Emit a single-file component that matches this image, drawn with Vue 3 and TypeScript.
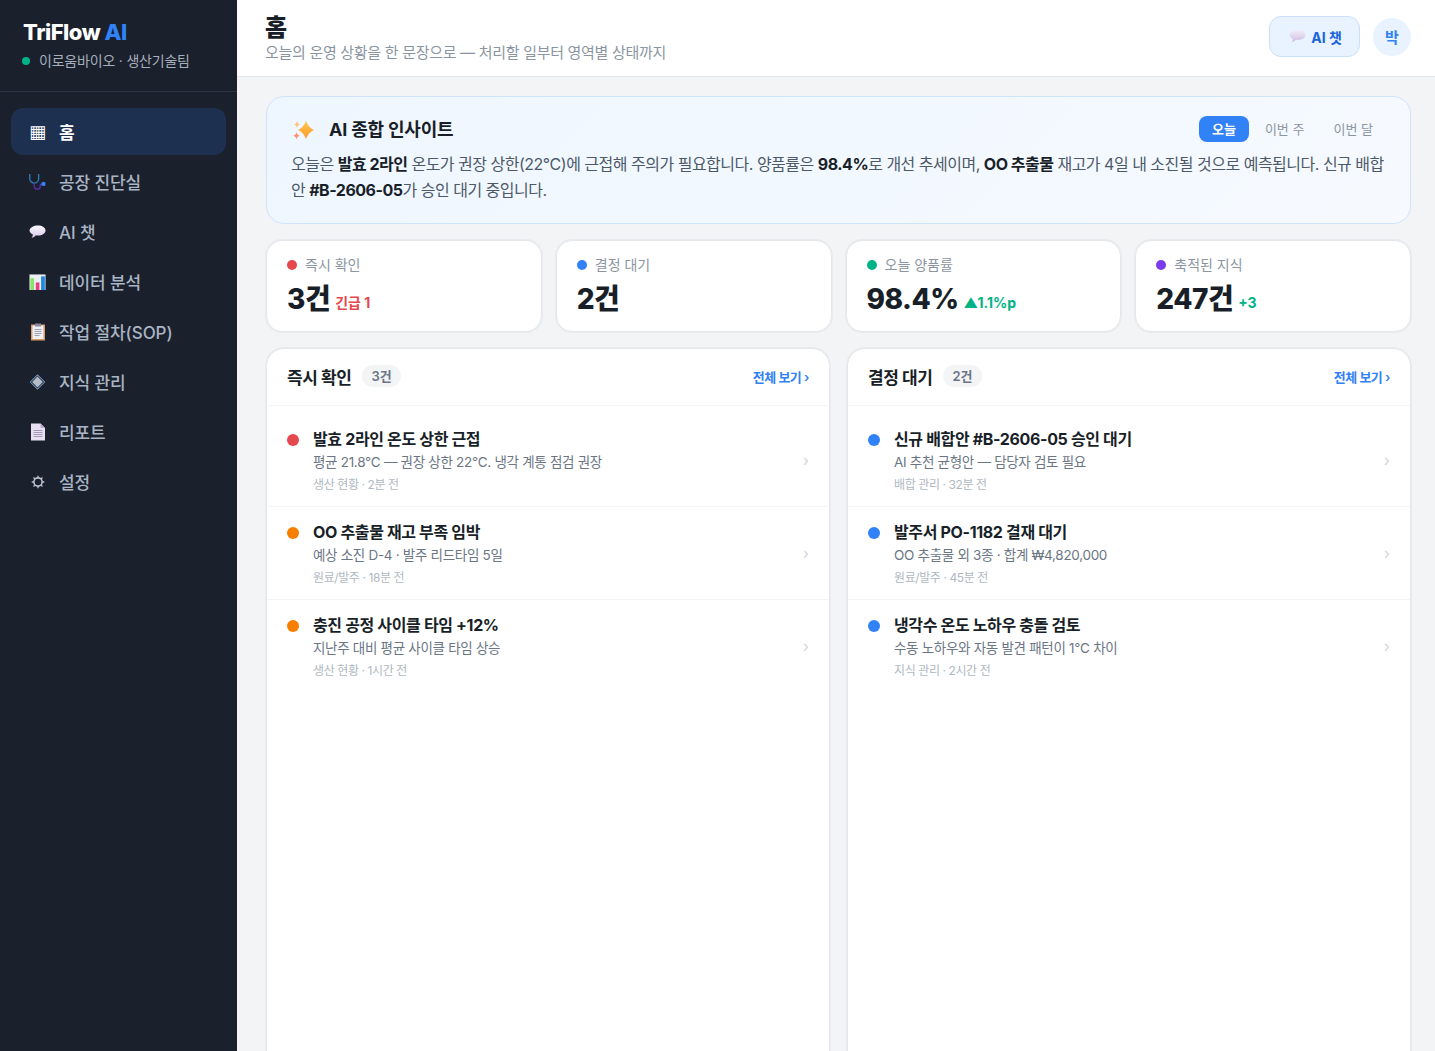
<script setup lang="ts">
const navItems = [
  { label: '홈', icon: 'home', active: true },
  { label: '공장 진단실', icon: 'steth' },
  { label: 'AI 챗', icon: 'chat' },
  { label: '데이터 분석', icon: 'chart' },
  { label: '작업 절차(SOP)', icon: 'clip' },
  { label: '지식 관리', icon: 'diamond' },
  { label: '리포트', icon: 'doc' },
  { label: '설정', icon: 'gear' },
];

const kpis = [
  { label: '즉시 확인', value: '3건', note: '긴급 1', dot: '#e5484d', noteColor: '#e5484d' },
  { label: '결정 대기', value: '2건', note: '', dot: '#3182f6', noteColor: '' },
  { label: '오늘 양품률', value: '98.4%', note: '▲1.1%p', dot: '#00b386', noteColor: '#00b386' },
  { label: '축적된 지식', value: '247건', note: '+3', dot: '#7c3aed', noteColor: '#00b386' },
];

const panels = [
  {
    title: '즉시 확인',
    count: '3건',
    items: [
      { title: '발효 2라인 온도 상한 근접', desc: '평균 21.8°C — 권장 상한 22°C. 냉각 계통 점검 권장', meta: '생산 현황 · 2분 전', dot: '#e5484d' },
      { title: 'OO 추출물 재고 부족 임박', desc: '예상 소진 D-4 · 발주 리드타임 5일', meta: '원료/발주 · 18분 전', dot: '#f77f00' },
      { title: '충진 공정 사이클 타임 +12%', desc: '지난주 대비 평균 사이클 타임 상승', meta: '생산 현황 · 1시간 전', dot: '#f77f00' },
    ],
  },
  {
    title: '결정 대기',
    count: '2건',
    items: [
      { title: '신규 배합안 #B-2606-05 승인 대기', desc: 'AI 추천 균형안 — 담당자 검토 필요', meta: '배합 관리 · 32분 전', dot: '#3182f6' },
      { title: '발주서 PO-1182 결재 대기', desc: 'OO 추출물 외 3종 · 합계 ₩4,820,000', meta: '원료/발주 · 45분 전', dot: '#3182f6' },
      { title: '냉각수 온도 노하우 충돌 검토', desc: '수동 노하우와 자동 발견 패턴이 1°C 차이', meta: '지식 관리 · 2시간 전', dot: '#3182f6' },
    ],
  },
];
</script>

<template>
  <div class="app">
    <aside class="sidebar">
      <div class="brand">
        <div class="logo">TriFlow <span>AI</span></div>
        <div class="org"><i class="org-dot"></i>이로움바이오 · 생산기술팀</div>
      </div>
      <nav class="nav">
        <a v-for="item in navItems" :key="item.label" class="nav-item" :class="{ active: item.active }">
          <span class="nav-icon">
            <template v-if="item.icon === 'home'">▦</template>
            <svg v-else-if="item.icon === 'steth'" width="18" height="18" viewBox="0 0 18 18" fill="none">
              <path d="M.8 .5v5a4.700 4.700 0 0 0 9.400 0v-5" stroke="#2f78b0" stroke-width="1.500" />
              <path d="M5.500 10.500v2c0 2.500 1.500 4.200 3.400 4.200s3-1.400 3-3.400c0-1.400.8-2.100 2.200-2.100" stroke="#5a2ea5" stroke-width="1.500" />
              <circle cx="15.300" cy="11" r="2.300" fill="#3182f6" />
            </svg>
            <svg v-else-if="item.icon === 'chat'" width="18" height="16" viewBox="0 0 18 16">
              <defs>
                <linearGradient id="bubbleNav" x1="0" y1="0" x2="0" y2="1">
                  <stop offset="0" stop-color="#fbf9fe" />
                  <stop offset="1" stop-color="#d9c9ec" />
                </linearGradient>
              </defs>
              <path d="M9.500 1c4.500 0 8 2.200 8 5.300s-3.500 5.300-8 5.300c-.8 0-1.500-.1-2.200-.2-1.100 1.400-2.700 2.300-4.700 2.700 1-1 1.500-2.100 1.500-3.500C2 9.500.6 8 .6 6.300.6 3.200 5 1 9.500 1z" fill="url(#bubbleNav)" />
            </svg>
            <svg v-else-if="item.icon === 'chart'" width="18" height="18" viewBox="0 0 18 18">
              <path d="M0.500 1h17v16.500H.5z" fill="#eceff1" />
              <path d="M1.500 5h3.800v12.500H1.500z" fill="#86e36a" />
              <path d="M7.200 9.500h3.800v8H7.200z" fill="#ec407a" />
              <path d="M12.800 3h4v14.500h-4z" fill="#1e88e5" />
            </svg>
            <svg v-else-if="item.icon === 'clip'" width="16" height="18" viewBox="0 0 16 18">
              <path d="M1 1.500h14V17.500H1z" fill="#d99a66" />
              <path d="M2.500 2.500h11v13.500h-11z" fill="#eef0f5" />
              <path d="M5 .5h6v3H5z" fill="#8d8aa0" />
              <path d="M4.500 6.500h7M4.500 8.500h7M4.500 10.500h7M4.500 12.500h5" stroke="#9e9eb0" stroke-width="1" />
            </svg>
            <svg v-else-if="item.icon === 'diamond'" width="18" height="18" viewBox="0 0 18 18">
              <path d="M9 .8 17.200 9 9 17.200.8 9z" fill="#7fa6d4" />
              <path d="M9 2 16 9 9 16 2 9z" fill="#1a202c" />
              <path d="M9 3.300 14.700 9 9 14.700 3.300 9z" fill="#b4bcc8" />
            </svg>
            <svg v-else-if="item.icon === 'doc'" width="16" height="18" viewBox="0 0 16 18">
              <path d="M1 .5h9.500L15 5v12.500H1z" fill="#e8dff2" />
              <path d="M10.500.5 15 5h-4.500z" fill="#b9a9cc" />
              <path d="M3.500 7.500h9M3.500 9.500h9M3.500 11.500h9M3.500 13.500h9" stroke="#a39ab5" stroke-width="1" />
            </svg>
            <svg v-else width="14" height="14" viewBox="0 0 16 16" fill="none">
              <circle cx="8" cy="8" r="4.700" stroke="#b7c0cc" stroke-width="1.800" />
              <path d="M8 .8v2.500M8 12.700v2.500M.8 8h2.500M12.700 8h2.500M2.900 2.900l1.700 1.700M11.400 11.400l1.700 1.700M13.100 2.900l-1.700 1.700M4.600 11.400l-1.700 1.700" stroke="#b7c0cc" stroke-width="1.500" />
            </svg>
          </span>
          <span>{{ item.label }}</span>
        </a>
      </nav>
    </aside>

    <div class="main">
      <header class="topbar">
        <div>
          <h1>홈</h1>
          <p>오늘의 운영 상황을 한 문장으로 — 처리할 일부터 영역별 상태까지</p>
        </div>
        <div class="top-actions">
          <button class="chat-btn">
            <svg width="17" height="15" viewBox="0 0 18 16">
              <defs>
                <linearGradient id="bubbleTop" x1="0" y1="0" x2="0" y2="1">
                  <stop offset="0" stop-color="#f3eef9" />
                  <stop offset="1" stop-color="#cdbce2" />
                </linearGradient>
              </defs>
              <path d="M9.500 1c4.500 0 8 2.200 8 5.300s-3.500 5.300-8 5.300c-.8 0-1.500-.1-2.200-.2-1.100 1.400-2.700 2.300-4.700 2.700 1-1 1.500-2.100 1.500-3.500C2 9.500.6 8 .6 6.300.6 3.200 5 1 9.500 1z" fill="url(#bubbleTop)" />
            </svg>
            AI 챗
          </button>
          <div class="avatar">박</div>
        </div>
      </header>

      <main class="content">
        <section class="insight">
          <div class="insight-head">
            <div class="insight-title">
              <svg width="24" height="24" viewBox="0 0 24 24">
                <defs>
                  <linearGradient id="sparkBig" x1="0" y1="0" x2="0" y2="1">
                    <stop offset="0" stop-color="#ffc64a" />
                    <stop offset="1" stop-color="#ff9a2e" />
                  </linearGradient>
                </defs>
                <path d="M15 3Q17.500 9.500 23 12 17.500 14.500 15 21 12.500 14.500 7 12 12.500 9.500 15 3z" fill="url(#sparkBig)" />
                <path d="M6 3c.4 1.900 1.200 2.900 3 3.400-1.800.5-2.600 1.500-3 3.400-.4-1.900-1.200-2.900-3-3.400 1.800-.5 2.600-1.500 3-3.400z" fill="#ffc27a" />
                <path d="M5.500 14c.5 2.200 1.400 3.200 3.400 3.700-2 .5-2.900 1.500-3.400 3.700-.5-2.200-1.400-3.200-3.400-3.700 2-.5 2.900-1.500 3.400-3.700z" fill="#ff8f70" />
              </svg>
              <h2>AI 종합 인사이트</h2>
            </div>
            <div class="tabs">
              <span class="tab on">오늘</span>
              <span class="tab">이번 주</span>
              <span class="tab">이번 달</span>
            </div>
          </div>
          <p class="insight-text">
            오늘은 <b>발효 2라인</b> 온도가 권장 상한(22°C)에 근접해 주의가 필요합니다. 양품률은 <b>98.4%</b>로 개선 추세이며, <b>OO 추출물</b> 재고가 4일 내 소진될 것으로 예측됩니다. 신규 배합안 <b>#B-2606-05</b>가 승인 대기 중입니다.
          </p>
        </section>

        <section class="kpis">
          <div v-for="kpi in kpis" :key="kpi.label" class="kpi">
            <div class="kpi-label"><i :style="{ background: kpi.dot }"></i>{{ kpi.label }}</div>
            <div class="kpi-value">
              <span>{{ kpi.value }}</span>
              <small v-if="kpi.note" :style="{ color: kpi.noteColor }">{{ kpi.note }}</small>
            </div>
          </div>
        </section>

        <section class="panels">
          <div v-for="panel in panels" :key="panel.title" class="panel">
            <div class="panel-head">
              <div class="panel-title">
                <h3>{{ panel.title }}</h3>
                <span class="count">{{ panel.count }}</span>
              </div>
              <a class="more">전체 보기 ›</a>
            </div>
            <div v-for="item in panel.items" :key="item.title" class="row">
              <i class="row-dot" :style="{ background: item.dot }"></i>
              <div class="row-body">
                <div class="row-title">{{ item.title }}</div>
                <div class="row-desc">{{ item.desc }}</div>
                <div class="row-meta">{{ item.meta }}</div>
              </div>
              <span class="chev">›</span>
            </div>
          </div>
        </section>
      </main>
    </div>
  </div>
</template>

<style>
html,
body {
  margin: 0;
  height: 100%;
  overflow: hidden;
}
</style>

<style scoped>
.app {
  display: flex;
  height: 1051px;
  overflow: hidden;
  font-family: Inter, 'Noto Sans CJK KR', sans-serif;
  color: #191f28;
}

.sidebar {
  width: 237px;
  flex-shrink: 0;
  background: #1a202c;
}

.brand {
  height: 92px;
  box-sizing: border-box;
  padding: 19px 23px 0;
  border-bottom: 1px solid #2d3340;
}

.logo {
  font-size: 22px;
  line-height: 27px;
  font-weight: 800;
  letter-spacing: -0.5px;
  color: #fff;
}

.logo span {
  color: #3182f6;
}

.org {
  display: flex;
  align-items: center;
  gap: 9px;
  margin-top: 4px;
  font-size: 14px;
  line-height: 22px;
  letter-spacing: -0.2px;
  color: #a6afbd;
}

.org-dot {
  width: 8px;
  height: 8px;
  margin-left: -1px;
  border-radius: 50%;
  background: #00b386;
}

.nav {
  display: flex;
  flex-direction: column;
  gap: 3px;
  padding: 16px 11px;
}

.nav-item {
  display: flex;
  align-items: center;
  height: 47px;
  padding: 0 18px;
  gap: 13px;
  border-radius: 12px;
  font-size: 17px;
  font-weight: 500;
  letter-spacing: -0.1px;
  color: #a9b4c4;
}

.nav-item.active {
  background: #1e3050;
  color: #fff;
  font-weight: 700;
}

.nav-icon {
  display: flex;
  justify-content: center;
  flex-shrink: 0;
  width: 17px;
  font-size: 18px;
  font-weight: 400;
  font-family: 'DejaVu Sans', sans-serif;
}

.main {
  flex: 1;
  min-width: 0;
  background: #f2f4f6;
}

.topbar {
  display: flex;
  align-items: center;
  justify-content: space-between;
  height: 77px;
  box-sizing: border-box;
  padding: 0 24px 0 28px;
  background: #fff;
  border-bottom: 1px solid #e5e8eb;
}

.topbar h1 {
  margin: 0;
  font-size: 24px;
  line-height: 28px;
  font-weight: 800;
}

.topbar p {
  margin: 1px 0 0;
  font-size: 15px;
  line-height: 20px;
  letter-spacing: -0.3px;
  color: #8b95a1;
}

.top-actions {
  display: flex;
  align-items: center;
  gap: 13px;
  margin-bottom: 3px;
}

.chat-btn {
  display: flex;
  align-items: center;
  gap: 5px;
  height: 41px;
  width: 91px;
  justify-content: center;
  padding: 0 0 0 2px;
  border: 1px solid #c9dffb;
  border-radius: 12px;
  background: #e8f3ff;
  font-family: inherit;
  font-size: 14px;
  font-weight: 700;
  color: #1b64da;
}

.avatar {
  display: flex;
  align-items: center;
  justify-content: center;
  width: 38px;
  height: 38px;
  border-radius: 50%;
  background: #e8f3ff;
  font-size: 15px;
  font-weight: 700;
  color: #3182f6;
}

.content {
  display: flex;
  flex-direction: column;
  gap: 16px;
  padding: 19px 24px 0 29px;
}

.insight {
  box-sizing: border-box;
  height: 128px;
  padding: 19px 24px 0 24px;
  border: 1px solid #cfe3fb;
  border-radius: 18px;
  background: linear-gradient(135deg, #eef6ff, #f6faff);
}

.insight-head {
  display: flex;
  align-items: center;
  justify-content: space-between;
}

.insight-title {
  display: flex;
  align-items: center;
  gap: 14px;
}

.insight-title svg {
  width: 24px;
}

.insight-title h2 {
  margin: 0;
  font-size: 18px;
  line-height: 28px;
  font-weight: 700;
  letter-spacing: -0.2px;
}

.tabs {
  display: flex;
  gap: 3px;
  margin-top: -2px;
}

.tab {
  padding: 0 13px;
  font-size: 13px;
  line-height: 26px;
  color: #8b95a1;
}

.tab.on {
  background: #3182f6;
  border-radius: 8px;
  color: #fff;
  font-weight: 700;
}

.insight-text {
  margin: 7px 0 0;
  font-size: 16px;
  line-height: 26px;
  letter-spacing: -0.5px;
  color: #4e5968;
}

.insight-text b {
  color: #191f28;
  font-weight: 700;
}

.kpis {
  display: grid;
  grid-template-columns: repeat(4, 1fr);
  gap: 14px;
}

.kpi {
  box-sizing: border-box;
  height: 92px;
  padding: 14px 20px 0;
  border: 1px solid #e5e8eb;
  border-radius: 16px;
  background: #fff;
  box-shadow: 0 0 0 1px #e9ebee;
}

.kpi-label {
  display: flex;
  align-items: center;
  gap: 8px;
  font-size: 14px;
  line-height: 20px;
  color: #8b95a1;
}

.kpi-label i {
  width: 10px;
  height: 10px;
  border-radius: 50%;
}

.kpi-value {
  display: flex;
  align-items: center;
  gap: 5px;
  margin-top: 6px;
  font-size: 28px;
  line-height: 36px;
  font-weight: 800;
  letter-spacing: -0.5px;
}

.kpi-value small {
  margin-top: 8px;
  font-size: 14px;
  line-height: 20px;
  font-weight: 700;
  letter-spacing: 0;
}

.panels {
  display: grid;
  grid-template-columns: 1fr 1fr;
  gap: 17px;
}

.panel {
  height: 720px;
  box-sizing: border-box;
  border: 1px solid #e5e8eb;
  border-radius: 18px;
  background: #fff;
  box-shadow: 0 0 0 1px #e9ebee;
}

.panel-head {
  display: flex;
  align-items: center;
  justify-content: space-between;
  height: 57px;
  box-sizing: border-box;
  padding: 0 20px 2px;
  border-bottom: 1px solid #f2f4f6;
}

.panel-title {
  display: flex;
  align-items: center;
  gap: 10px;
}

.panel-title h3 {
  margin: 0;
  font-size: 17px;
  font-weight: 700;
  letter-spacing: -0.4px;
}

.count {
  padding: 0 10px;
  border-radius: 12px;
  background: #f2f4f6;
  font-size: 13px;
  font-weight: 600;
  line-height: 22px;
  letter-spacing: -0.2px;
  color: #6b7684;
}

.more {
  font-size: 13px;
  font-weight: 600;
  letter-spacing: -0.5px;
  color: #3182f6;
}

.row {
  display: flex;
  align-items: flex-start;
  padding: 14px 20px 12px;
  border-bottom: 1px solid #f2f4f6;
}

.panel-head + .row {
  padding-top: 22px;
}

.row:last-child {
  border-bottom: none;
}

.row-dot {
  width: 12px;
  height: 12px;
  margin: 6px 14px 0 0;
  border-radius: 50%;
  flex-shrink: 0;
}

.row-body {
  flex: 1;
}

.row-title {
  font-size: 16px;
  line-height: 22px;
  font-weight: 700;
  letter-spacing: -0.35px;
}

.row-desc {
  margin-top: 2px;
  font-size: 13.500px;
  line-height: 20px;
  letter-spacing: -0.3px;
  color: #6b7684;
}

.row-meta {
  margin-top: 4px;
  font-size: 12px;
  line-height: 18px;
  letter-spacing: -0.4px;
  color: #b0b8c1;
}

.chev {
  align-self: center;
  margin-top: -2px;
  font-size: 16px;
  color: #d1d6db;
}
</style>
